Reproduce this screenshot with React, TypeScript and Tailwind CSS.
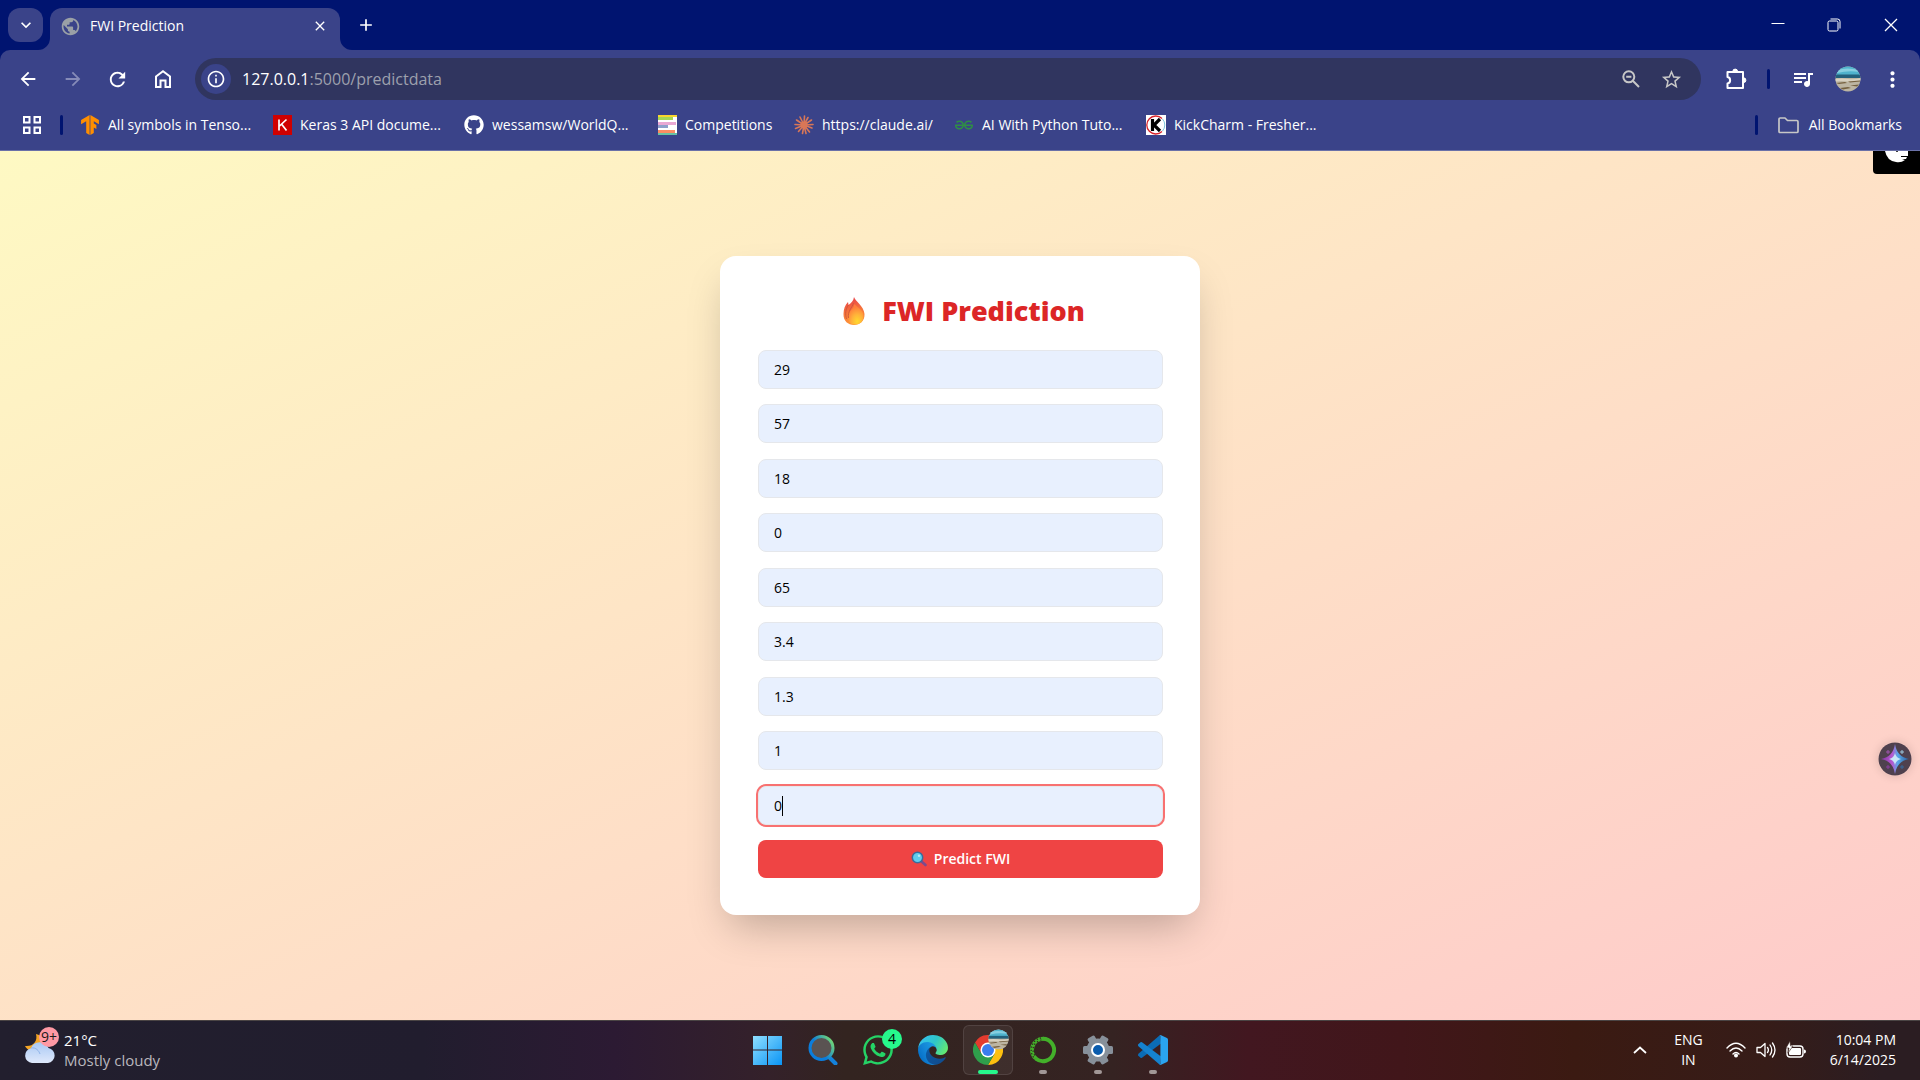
import { ReactNode, useState } from "react";
import {
  MdAdd,
  MdArrowBack,
  MdArrowForward,
  MdClose,
  MdExpandMore,
  MdInfoOutline,
  MdMoreVert,
  MdPublic,
  MdQueueMusic,
  MdRefresh,
  MdStarBorder,
} from "react-icons/md";
import { FaGithub, FaWhatsapp } from "react-icons/fa";
import { SiGeeksforgeeks, SiTensorflow } from "react-icons/si";

function Beach({ className }: { className: string }) {
  return (
    <svg viewBox="0 0 26 26" className={className} aria-hidden="true">
      <clipPath id="beach">
        <circle cx="13" cy="13" r="12.5" />
      </clipPath>
      <g clipPath="url(#beach)">
        <rect width="26" height="26" fill="#bdb5a2" />
        <rect width="26" height="10" fill="#4fb3cd" />
        <path d="M2 4q10-3 22 0v2q-10-2-22 1z" fill="#86cfe0" />
        <rect y="8.500" width="26" height="3.500" fill="#23617c" />
        <path d="M0 13q7-1 13 0t13-1v2.500q-7 2-13 1t-13 0z" fill="#d8d1c0" />
        <path d="M1 17l9-1 2 1-8 1zM13 15.500l12-1v1l-10 1zM5 22l8-1 3 1-8 1.500zM15 19.500l9-1-2 2z" fill="#75603f" />
      </g>
    </svg>
  );
}

function Claude() {
  return (
    <svg viewBox="0 0 20 20" className="size-5" stroke="#d97757" strokeWidth="1.600" strokeLinecap="round" aria-hidden="true">
      <path d="M10 10L10.500 1M10 10L14 2.500M10 10L17.500 5M10 10L19 9.500M10 10L18 13M10 10L15.500 17M10 10L12 18.500M10 10L8.500 18.500M10 10L4.500 16.500M10 10L1.500 13.500M10 10L1 9.500M10 10L2.500 5M10 10L6 2" />
      <circle cx="10" cy="10" r="2.600" fill="#d97757" />
    </svg>
  );
}

function Competitions() {
  return (
    <svg viewBox="0 0 19 20" className="h-5 w-[19px]" aria-hidden="true">
      <path fill="#fff" d="M0 0h19v20H0z" />
      <path fill="#f9d62e" d="M0 0h19v2H0z" />
      <path fill="#a6d854" d="M0 2h15v3H0z" />
      <path fill="#e9a8d4" d="M0 7h18v3H0z" />
      <path fill="#8da0cb" d="M0 10h10v3H0z" />
      <path fill="#fc8d62" d="M0 15h17v3H0z" />
      <path fill="#66c2a5" d="M0 18h19v2H0z" />
    </svg>
  );
}

function Keras() {
  return (
    <svg viewBox="0 0 19 20" className="h-5 w-[19px]" aria-hidden="true">
      <path fill="#d00000" d="M0 0h19v20H0z" />
      <path d="M6 4.500v11M13.500 4.500L6.500 11M8.500 9l5 6.500" stroke="#fff" strokeWidth="1.700" fill="none" />
    </svg>
  );
}

function KickCharm() {
  return (
    <svg viewBox="0 0 20 20" className="size-5" aria-hidden="true">
      <path fill="#fff" d="M0 0h20v20H0z" />
      <path d="M16 3.500A9 9 0 1 0 16 16.500" stroke="#d8232a" strokeWidth="1.300" fill="none" />
      <path d="M16.500 4A9 9 0 0 1 16.500 16" stroke="#7cc4dc" strokeWidth="1" fill="none" />
      <path d="M6.500 4v12M14 4l-6 6 6 6" stroke="#000" strokeWidth="3.200" fill="none" />
    </svg>
  );
}

const bookmarks: { label: string; icon: ReactNode; width: string }[] = [
  { label: "All symbols in Tenso...", icon: <SiTensorflow className="size-5 text-[#ff8f00]" />, width: "w-[192px]" },
  { label: "Keras 3 API docume...", icon: <Keras />, width: "w-[192px]" },
  { label: "wessamsw/WorldQ...", icon: <FaGithub className="size-5" />, width: "w-[193px]" },
  { label: "Competitions", icon: <Competitions />, width: "w-[137px]" },
  { label: "https://claude.ai/", icon: <Claude />, width: "w-[160px]" },
  { label: "AI With Python Tuto...", icon: <SiGeeksforgeeks className="size-[18px] text-[#2f8d46]" />, width: "w-[192px]" },
  { label: "KickCharm - Fresher...", icon: <KickCharm />, width: "w-[192px]" },
];

function TabStrip() {
  return (
    <div className="flex h-[50px] items-end bg-[#001470] pl-2 text-white">
      <button aria-label="Search tabs" className="mb-2 flex h-[34px] w-[35px] items-center justify-center rounded-xl bg-[#3a4389]">
        <MdExpandMore className="size-5" />
      </button>
      <div className="relative ml-[7px] flex h-[42px] w-[290px] items-center rounded-t-xl bg-[#3a4389] px-[10px] pt-1.5 pb-3">
        <svg viewBox="0 0 12 12" className="absolute bottom-0 -left-3 size-3 text-[#3a4389]" aria-hidden="true">
          <path d="M12 0v12H0A12 12 0 0 0 12 0z" fill="currentColor" />
        </svg>
        <svg viewBox="0 0 12 12" className="absolute -right-3 bottom-0 size-3 text-[#3a4389]" aria-hidden="true">
          <path d="M0 0v12h12A12 12 0 0 1 0 0z" fill="currentColor" />
        </svg>
        <MdPublic className="size-[21px] text-[#9aa0a6]" />
        <span className="ml-[9px] flex-1 text-sm">FWI Prediction</span>
        <button aria-label="Close tab" className="flex size-5 items-center justify-center">
          <MdClose className="size-4" />
        </button>
      </div>
      <button aria-label="New tab" className="mb-[15px] ml-4 flex size-5 items-center justify-center">
        <MdAdd className="size-5" />
      </button>
      <div className="flex-1" />
      <div className="flex h-full items-center">
        <button aria-label="Minimize" className="flex h-full w-14 items-center justify-center">
          <svg viewBox="0 0 14 14" className="size-[14px]" stroke="currentColor" aria-hidden="true">
            <path d="M0.500 5.500h13" />
          </svg>
        </button>
        <button aria-label="Restore" className="flex h-full w-14 items-center justify-center">
          <svg viewBox="0 0 14 14" className="size-[14px]" stroke="currentColor" fill="none" aria-hidden="true">
            <rect x="1" y="3" width="10" height="10" rx="1.500" />
            <path d="M3.500 1h7A2.500 2.500 0 0 1 13 3.500v7" />
          </svg>
        </button>
        <button aria-label="Close" className="flex h-full w-[58px] items-center justify-center">
          <svg viewBox="0 0 14 14" className="size-[14px]" stroke="currentColor" aria-hidden="true">
            <path d="M1 1l12 12M13 1L1 13" strokeWidth="1.300" />
          </svg>
        </button>
      </div>
    </div>
  );
}

function BarButton({ label, children }: { label: string; children: ReactNode }) {
  return (
    <button aria-label={label} className="flex h-[42px] w-[45px] shrink-0 items-center justify-center">
      {children}
    </button>
  );
}

function Toolbar() {
  return (
    <div className="flex h-[58px] items-center px-[5px] text-white">
      <BarButton label="Back">
        <MdArrowBack className="size-[22px]" />
      </BarButton>
      <BarButton label="Forward">
        <MdArrowForward className="size-[22px] text-[#868bb8]" />
      </BarButton>
      <BarButton label="Reload">
        <MdRefresh className="size-[23px]" />
      </BarButton>
      <BarButton label="Home">
        <svg viewBox="0 0 18 20" className="h-5 w-[18px]" fill="none" stroke="currentColor" strokeWidth="2" aria-hidden="true">
          <path d="M2 7.500L9 2.300l7 5.200V18h-4.500v-6.500h-5V18H2z" />
        </svg>
      </BarButton>
      <div className="ml-[10px] flex h-[42px] flex-1 items-center rounded-full bg-[#30355f] pr-[18px] pl-[6px]">
        <button aria-label="Site information" className="flex size-[30px] items-center justify-center rounded-full bg-[#3a4389]">
          <MdInfoOutline className="size-5" />
        </button>
        <span className="ml-[11px] flex-1 text-base">
          127.0.0.1<span className="text-[#9da0ad]">:5000/predictdata</span>
        </span>
        <button aria-label="Zoom" className="mr-5 text-[#c7c7c7]">
          <svg viewBox="0 0 18 18" className="size-[18px]" fill="none" stroke="currentColor" strokeWidth="2" aria-hidden="true">
            <circle cx="6.800" cy="6.800" r="5.500" />
            <path d="M10.800 10.800l6.200 6.200M4.200 6.800h5.200" />
          </svg>
        </button>
        <button aria-label="Bookmark this tab" className="text-[#c7c7c7]">
          <MdStarBorder className="size-[23px]" />
        </button>
      </div>
      <div className="ml-3 flex items-center">
        <BarButton label="Extensions">
          <svg viewBox="0 0 22 22" className="size-[22px]" fill="none" stroke="currentColor" strokeWidth="2" strokeLinejoin="round" aria-hidden="true">
            <path d="M2.500 4h15.500v16H2.500v-4.500c3.500-.5 3.500-6 0-6.500z" />
            <path d="M7.800 3.500a2.400 2.400 0 0 1 4.800 0zM18.500 9.800a2.400 2.400 0 0 1 0 4.800z" fill="currentColor" strokeWidth="1" />
          </svg>
        </BarButton>
        <span className="mr-[10px] ml-[9px] h-5 w-[3px] rounded bg-[#001470]" />
        <BarButton label="Media controls">
          <MdQueueMusic className="size-6" />
        </BarButton>
        <BarButton label="Profile">
          <Beach className="size-[26px]" />
        </BarButton>
        <BarButton label="More">
          <MdMoreVert className="size-[25px]" />
        </BarButton>
      </div>
    </div>
  );
}

function BookmarksBar() {
  return (
    <nav aria-label="Bookmarks" className="flex h-[35px] items-center pb-[1px] text-sm text-white">
      <button aria-label="Apps" className="ml-5 flex size-6 items-center justify-center">
        <svg viewBox="0 0 18 18" className="size-[18px]" fill="none" stroke="currentColor" strokeWidth="2" aria-hidden="true">
          <path d="M1 1h5.500v5.500H1zM11.500 1H17v5.500h-5.500zM1 11.500h5.500V17H1zM11.500 11.500H17V17h-5.500z" />
        </svg>
      </button>
      <span className="ml-4 h-5 w-[3px] rounded bg-[#001470]" />
      <ul className="ml-[17px] flex flex-1">
        {bookmarks.map((b) => (
          <li key={b.label} className={b.width}>
            <a href="#" className="flex items-center gap-2 whitespace-nowrap">
              <span className="flex w-5 shrink-0 justify-center">{b.icon}</span>
              {b.label}
            </a>
          </li>
        ))}
      </ul>
      <span className="h-5 w-[3px] rounded bg-[#001470]" />
      <button className="mr-[18px] ml-5 flex items-center gap-[10px]">
        <svg viewBox="0 0 21 17" className="h-[17px] w-[21px]" fill="none" stroke="#c7c7c7" strokeWidth="1.700" strokeLinejoin="round" aria-hidden="true">
          <path d="M1 14.500V2.200Q1 1 2.200 1H7l2.500 2.500h9.300q1.200 0 1.200 1.200v9.800q0 1-1.200 1H2.200Q1 15.500 1 14.500z" />
        </svg>
        All Bookmarks
      </button>
    </nav>
  );
}

function Flame() {
  return (
    <svg viewBox="0 0 22 28" className="h-7 w-[22px]" aria-hidden="true">
      <defs>
        <linearGradient id="flameOuter" x1="0.400" y1="0" x2="0.600" y2="1">
          <stop offset="0" stopColor="#e8404a" />
          <stop offset="0.450" stopColor="#f5703c" />
          <stop offset="1" stopColor="#ff9a36" />
        </linearGradient>
        <radialGradient id="flameCore" cx="0.600" cy="0.850" r="0.700">
          <stop offset="0" stopColor="#ffd92e" />
          <stop offset="0.500" stopColor="#ffb23a" />
          <stop offset="1" stopColor="#ff7f3a" />
        </radialGradient>
      </defs>
      <path d="M11 0c1 4 10 9 10.500 17 .3 7-4.500 11-10.500 11S.3 24 .5 17C.6 12 2 8 5 5c.3 1 .3 2 .5 3C8 6 10.500 4 11 0z" fill="url(#flameOuter)" />
      <path d="M11.500 7C13 10 20.500 12 20.500 19c0 5-3.500 8.500-8.500 8.500S4.500 24 5 19c.4-5 5.500-6.500 6.500-12z" fill="url(#flameCore)" />
      <path d="M5.500 8C2.500 12 2 17 3.500 22M10.500 6C9 11 4.500 14 5.500 21" stroke="#c8523a" strokeWidth="0.800" fill="none" />
    </svg>
  );
}

function Magnifier() {
  return (
    <svg viewBox="0 0 16 16" className="size-4" aria-hidden="true">
      <path d="M10 10l4.500 4" stroke="#7c4a8c" strokeWidth="2.600" strokeLinecap="round" />
      <circle cx="6.500" cy="6.500" r="5.200" fill="#5fcdee" stroke="#3b6c9c" strokeWidth="1.500" />
      <circle cx="8" cy="4.800" r="1.200" fill="#b5ecfa" />
    </svg>
  );
}

const fields = [
  ["Temperature", "29"],
  ["RH", "57"],
  ["Ws", "18"],
  ["Rain", "0"],
  ["FFMC", "65"],
  ["DMC", "3.4"],
  ["ISI", "1.3"],
  ["Classes", "1"],
  ["Region", "0"],
];

function PredictionCard() {
  const [values, setValues] = useState(fields.map(([, v]) => v));
  return (
    <section className="w-full max-w-[480px] rounded-2xl bg-white pt-[37px] pr-[37px] pb-[37px] pl-[38px] shadow-[0_20px_40px_-10px_rgba(0,0,0,0.25)]">
      <h1 className="mb-[21px] flex h-9 items-center justify-center gap-[17px] pl-[7px] text-[27px] font-extrabold text-[#dc2626]">
        <Flame />
        FWI Prediction
      </h1>
      <form className="flex min-h-[528px] flex-col justify-between" onSubmit={(e) => e.preventDefault()}>
        {fields.map(([name], i) => {
          const active = i === fields.length - 1;
          return (
            <div key={name} className="relative">
              <input
                aria-label={name}
                value={values[i]}
                onChange={(e) => setValues(values.map((v, j) => (j === i ? e.target.value : v)))}
                className={`block h-[39px] w-full rounded-lg border border-gray-200 bg-[#e8f0fe] px-[15px] text-sm text-black outline-none ${
                  active ? "ring-2 ring-[#f87171]" : ""
                }`}
              />
              {active && <span className="absolute top-[10px] left-6 h-5 w-px bg-black" />}
            </div>
          );
        })}
        <button type="submit" className="flex h-[38px] items-center justify-center gap-[7px] rounded-lg bg-[#ef4444] text-sm font-semibold text-white">
          <Magnifier />
          Predict FWI
        </button>
      </form>
    </section>
  );
}

function Weather() {
  return (
    <svg viewBox="0 0 36 38" className="h-[38px] w-9" aria-hidden="true">
      <defs>
        <linearGradient id="cloud" x1="0" y1="0" x2="0" y2="1">
          <stop offset="0" stopColor="#a9c8f4" />
          <stop offset="1" stopColor="#dfe9fb" />
        </linearGradient>
      </defs>
      <path d="M12 7c2 7-3 13-11 12 3 6 12 8 18 2 4-4 2-12-7-14z" fill="#f5a524" />
      <path d="M8 36a7.500 7.500 0 0 1-1-14.800A9.500 9.500 0 0 1 24.500 21 7.600 7.600 0 0 1 24 36z" fill="url(#cloud)" />
      <path d="M7 21c5-1 8 3 9 6" stroke="#8fb3ea" fill="none" />
      <circle cx="25" cy="10" r="10" fill="#ff99a4" />
      <text x="25" y="15" textAnchor="middle" fontSize="14" fill="#1a1a1a" fontFamily="Open Sans, sans-serif">
        9+
      </text>
    </svg>
  );
}

function Windows() {
  return (
    <svg viewBox="0 0 30 30" className="size-[30px]" aria-hidden="true">
      <linearGradient id="win" x1="0" y1="0" x2="1" y2="1">
        <stop offset="0" stopColor="#8fdfff" />
        <stop offset="1" stopColor="#0a94f5" />
      </linearGradient>
      <path d="M0 1h14v13.500H0zM15 1h14v13.500H15zM0 15.500h14V30H0zM15 15.500h14V30H15z" fill="url(#win)" />
    </svg>
  );
}

function SearchIcon() {
  return (
    <svg viewBox="0 0 30 30" className="size-[30px]" fill="none" aria-hidden="true">
      <linearGradient id="lens" x1="0" y1="0.800" x2="1" y2="0.100">
        <stop offset="0.400" stopColor="#0b7ddb" />
        <stop offset="1" stopColor="#7ee06a" />
      </linearGradient>
      <path d="M21.500 22.500l6 6" stroke="#1482dc" strokeWidth="4" strokeLinecap="round" />
      <circle cx="13.500" cy="13" r="11.500" fill="#5a5352" stroke="url(#lens)" strokeWidth="3" />
    </svg>
  );
}

function Edge() {
  return (
    <svg viewBox="0 0 256 256" className="size-[30px]" aria-hidden="true">
      <defs>
        <linearGradient id="edgeA" x1="0.200" y1="0" x2="1" y2="1">
          <stop offset="0" stopColor="#0c59a4" />
          <stop offset="1" stopColor="#114a8b" />
        </linearGradient>
        <linearGradient id="edgeB" x1="1" y1="0.400" x2="0.100" y2="1">
          <stop offset="0" stopColor="#1b9de2" />
          <stop offset="0.500" stopColor="#1384d6" />
          <stop offset="1" stopColor="#0067c0" />
        </linearGradient>
        <linearGradient id="edgeC" x1="0" y1="0.300" x2="1" y2="0.700">
          <stop offset="0" stopColor="#35c1f1" />
          <stop offset="0.500" stopColor="#2fc6c8" />
          <stop offset="1" stopColor="#66eb6e" />
        </linearGradient>
      </defs>
      <path d="M231 190.500c-3.400 1.800-6.900 3.400-10.500 4.700a101.500 101.500 0 0 1-35.900 6.500c-47.300 0-88.500-32.500-88.500-74.300a31.500 31.500 0 0 1 16.400-27.300c-42.800 1.800-53.800 46.400-53.800 72.500 0 74 68.100 81.400 82.800 81.400 7.900 0 19.800-2.300 27-4.600l1.300-.4a128.300 128.300 0 0 0 66.600-52.800 4 4 0 0 0-5.400-5.700z" fill="url(#edgeA)" />
      <path d="M105.700 241.400a79.200 79.200 0 0 1-22.700-21.300 80.700 80.700 0 0 1 29.500-120c3.200-1.500 8.500-4.100 15.600-4a32.400 32.400 0 0 1 25.700 13 31.900 31.900 0 0 1 6.300 18.700c0-.2 24.500-79.600-80-79.600-43.900 0-80 41.600-80 78.200a130.200 130.200 0 0 0 12.100 56 128 128 0 0 0 156.400 67 75.500 75.500 0 0 1-62.800-8z" fill="url(#edgeB)" />
      <path d="M152.300 148.900c-.9 1-3.400 2.500-3.400 5.600 0 2.600 1.700 5.200 4.800 7.300 14.300 10 41.400 8.600 41.500 8.600a59.600 59.600 0 0 0 30.300-8.300 61.400 61.400 0 0 0 30.400-52.900c.3-22.400-8-37.300-11.300-43.900C223.500 23.900 177.700 0 128 0A128 128 0 0 0 0 126.200c.5-36.500 36.800-66 80-66 3.500 0 23.500.3 42 10.100 16.300 8.600 24.900 18.900 30.800 29.200 6.200 10.700 7.300 24.100 7.300 29.500s-2.700 13.300-7.800 19.900z" fill="url(#edgeC)" />
    </svg>
  );
}

function Chrome() {
  return (
    <svg viewBox="0 0 30 30" className="size-[30px]" aria-hidden="true">
      <path d="M2 7.500A15 15 0 0 1 28 7.500H15L8.500 18.800z" fill="#e33b2e" />
      <path d="M28 7.500A15 15 0 0 1 15 30l6.500-11.200L15 7.500z" fill="#fdc00f" />
      <path d="M15 30A15 15 0 0 1 2 7.500l6.500 11.300h13z" fill="#2f9e4b" />
      <circle cx="15" cy="15" r="7.500" fill="#fff" />
      <circle cx="15" cy="15" r="6" fill="#3b7ded" />
    </svg>
  );
}

function Anaconda() {
  return (
    <svg viewBox="0 0 30 30" className="size-[30px]" fill="none" aria-hidden="true">
      <path d="M15 3.800A11.200 11.200 0 1 1 8 23.800" stroke="#43b02a" strokeWidth="4" />
      <path d="M15.500 3.800A11.200 11.200 0 0 0 8.500 24" stroke="#43b02a" strokeWidth="4" />
      <path d="M13 2.800A12.500 12.500 0 0 0 7 24" stroke="#33231f" strokeWidth="1.200" strokeDasharray="1.300 2" />
      <path d="M13.500 5A10 10 0 0 0 8 22" stroke="#33231f" strokeWidth="1.200" strokeDasharray="1.300 2.400" />
    </svg>
  );
}

function Gear() {
  return (
    <svg viewBox="0 0 30 30" className="size-[30px]" aria-hidden="true">
      <g fill="#87909a">
        <circle cx="15" cy="15" r="11.500" />
        {[0, 60, 120].map((a) => (
          <rect key={a} x="0" y="11" width="30" height="8" rx="1.500" transform={`rotate(${a} 15 15)`} />
        ))}
      </g>
      <circle cx="15" cy="15" r="6" fill="#0a5cad" stroke="#fff" strokeWidth="2" />
    </svg>
  );
}

function Code() {
  return (
    <svg viewBox="0 0 30 30" className="size-[30px]" aria-hidden="true">
      <path d="M0 20.500Q-.3 19.500.7 18.600L22 0l1 8.500L4 22.800q-.8.600-1.500 0z" fill="#0b6cb5" />
      <path d="M0 9.500q-.3 1 .7 1.900L22 30l1-8.500L4 7.200q-.8-.6-1.500 0z" fill="#1582cf" />
      <path d="M21.500.3q.8-.5 1.600-.1l5.900 2.900q1 .5 1 1.600v20.600q0 1.100-1 1.600l-5.900 2.900q-.8.400-1.600-.2.900.3.900-1V1.400q0-1.400-.9-1.100z" fill="#2aa4f0" />
    </svg>
  );
}

function TaskItem({ label, children, running }: { label: string; children: ReactNode; running?: boolean }) {
  return (
    <button aria-label={label} className="relative flex h-full w-[55px] items-center justify-center">
      {children}
      {running && <span className="absolute bottom-1 h-1 w-2 rounded-full bg-[#a19796]" />}
    </button>
  );
}

function Taskbar() {
  return (
    <footer className="grid h-[60px] grid-cols-[1fr_auto_1fr] border-t border-[#4a4444] bg-[linear-gradient(to_right,#221f2e_0%,#211d2e_22%,#2c1a33_32%,#34212a_40%,#332420_44%,#352322_58%,#421720_65%,#41161a_73%,#3b1a12_82%,#361c18_92%,#2b1d22_98%)] pb-0.5 text-sm leading-5 text-white">
      <button className="flex items-center gap-1 pl-6 text-left">
        <span className="pb-2">
          <Weather />
        </span>
        <span className="text-[15px] leading-5">
          <span className="block">21°C</span>
          <span className="block text-[#b9b7bd]">Mostly cloudy</span>
        </span>
      </button>
      <div className="flex">
        <TaskItem label="Start">
          <Windows />
        </TaskItem>
        <TaskItem label="Search">
          <SearchIcon />
        </TaskItem>
        <TaskItem label="WhatsApp, 4 unread">
          <FaWhatsapp className="size-[34px] text-[#25d366]" />
          <span className="absolute top-2 right-[3px] flex size-5 items-center justify-center rounded-full bg-[#26f88c] text-black">4</span>
        </TaskItem>
        <TaskItem label="Edge">
          <Edge />
        </TaskItem>
        <button aria-label="Chrome" className="relative flex h-full w-[55px] items-center justify-center">
          <span className="flex h-[50px] w-[50px] items-center justify-center rounded-md border border-white/10 bg-white/5">
            <Chrome />
          </span>
          <Beach className="absolute top-2 right-[6px] size-[21px]" />
          <span className="absolute bottom-1 h-1 w-5 rounded-full bg-[#26f88c]" />
        </button>
        <TaskItem label="Anaconda" running>
          <Anaconda />
        </TaskItem>
        <TaskItem label="Settings" running>
          <Gear />
        </TaskItem>
        <TaskItem label="Visual Studio Code" running>
          <Code />
        </TaskItem>
      </div>
      <div className="flex items-center justify-end pr-6">
        <button aria-label="Show hidden icons" className="mr-[27px]">
          <svg viewBox="0 0 14 8" className="h-2 w-[14px]" fill="none" stroke="currentColor" strokeWidth="1.800" aria-hidden="true">
            <path d="M1 7l6-5.500L13 7" />
          </svg>
        </button>
        <button className="mr-[23px] text-center">
          ENG
          <br />
          IN
        </button>
        <button aria-label="Network, volume and battery" className="mr-6 flex items-center gap-[10px]">
          <svg viewBox="0 0 20 16" className="h-4 w-5" fill="none" stroke="currentColor" strokeWidth="1.400" strokeLinecap="round" aria-hidden="true">
            <path d="M1 6q9-9.500 18 0M4 9q6-6 12 0M7 12q3-3 6 0" />
            <circle cx="10" cy="13.500" r="1.300" fill="currentColor" />
          </svg>
          <svg viewBox="0 0 20 18" className="h-[18px] w-5" fill="none" stroke="currentColor" strokeWidth="1.300" strokeLinecap="round" strokeLinejoin="round" aria-hidden="true">
            <path d="M1 6.500h3.500L9 2.500v13l-4.500-4H1zM11.500 6.500q1.800 2.500 0 5M14 4q3.500 5 0 10M16.500 2q5 7 0 14" />
          </svg>
          <svg viewBox="0 0 20 18" className="h-[18px] w-5" aria-hidden="true">
            <rect x="1" y="5" width="16" height="11" rx="3" fill="none" stroke="currentColor" strokeWidth="1.400" />
            <rect x="3" y="7" width="12" height="7" rx="1" fill="currentColor" />
            <path d="M18 8.500q2 0 2 2t-2 2z" fill="currentColor" />
            <path d="M4 0L0 7h3l-1 5 5-7H4.500z" fill="currentColor" stroke="#361c18" strokeWidth="0.600" />
          </svg>
        </button>
        <button className="text-right">
          10:04 PM
          <br />
          6/14/2025
        </button>
      </div>
    </footer>
  );
}

function Sparkle() {
  return (
    <svg viewBox="0 0 34 34" className="size-[34px]" aria-hidden="true">
      <defs>
        <linearGradient id="spark" x1="0" y1="0" x2="1" y2="0">
          <stop offset="0.100" stopColor="#8f3fae" />
          <stop offset="0.400" stopColor="#b659d0" />
          <stop offset="0.600" stopColor="#58a8e8" />
          <stop offset="1" stopColor="#2d5f9e" />
        </linearGradient>
      </defs>
      <circle cx="17" cy="17" r="16.500" fill="#4f414e" />
      <path d="M17 2q2 13 14 15-12 2-14 15Q15 19 3 17 15 15 17 2z" fill="url(#spark)" />
      <path d="M17 11q1 5 6 6-5 1-6 6-1-5-6-6 5-1 6-6z" fill="#c9e6f8" />
      <path d="M10 8v4M8 10h4" stroke="#a055b0" />
      <path d="M24 8v4M22 10h4" stroke="#9cc8dc" />
      <path d="M10 23v4M8 25h4" stroke="#8a3f9e" />
      <path d="M24 23v4M22 25h4" stroke="#36689c" />
    </svg>
  );
}

export default function App() {
  return (
    <div className="flex min-h-screen flex-col font-['Open_Sans','Noto_Sans',sans-serif]">
      <header className="bg-[#001470]">
        <TabStrip />
        <div className="rounded-t-[10px] border-b border-[#6a71a8] bg-[#3a4389] pb-[7px]">
          <Toolbar />
          <BookmarksBar />
        </div>
      </header>
      <main className="relative flex flex-1 items-center justify-center bg-[linear-gradient(to_bottom_right,#fef9c3,#fecaca)]">
        <PredictionCard />
        <button aria-label="Toggle theme" className="absolute top-0 right-0 flex h-[23px] w-[47px] justify-center rounded-bl-sm bg-black">
          <svg viewBox="0 0 24 12" className="h-3 w-6" aria-hidden="true">
            <path d="M0 0h23v5h-7v1h6l-1 2h-4l3 1q-4 3-9 2Q2 10 0 0z" fill="#fff" />
            <circle cx="12" cy="0" r="1" />
          </svg>
        </button>
        <button aria-label="Assistant" className="absolute right-2 bottom-[244px] rounded-full shadow-[0_0_10px_rgba(0,0,0,0.15)]">
          <Sparkle />
        </button>
      </main>
      <Taskbar />
    </div>
  );
}
